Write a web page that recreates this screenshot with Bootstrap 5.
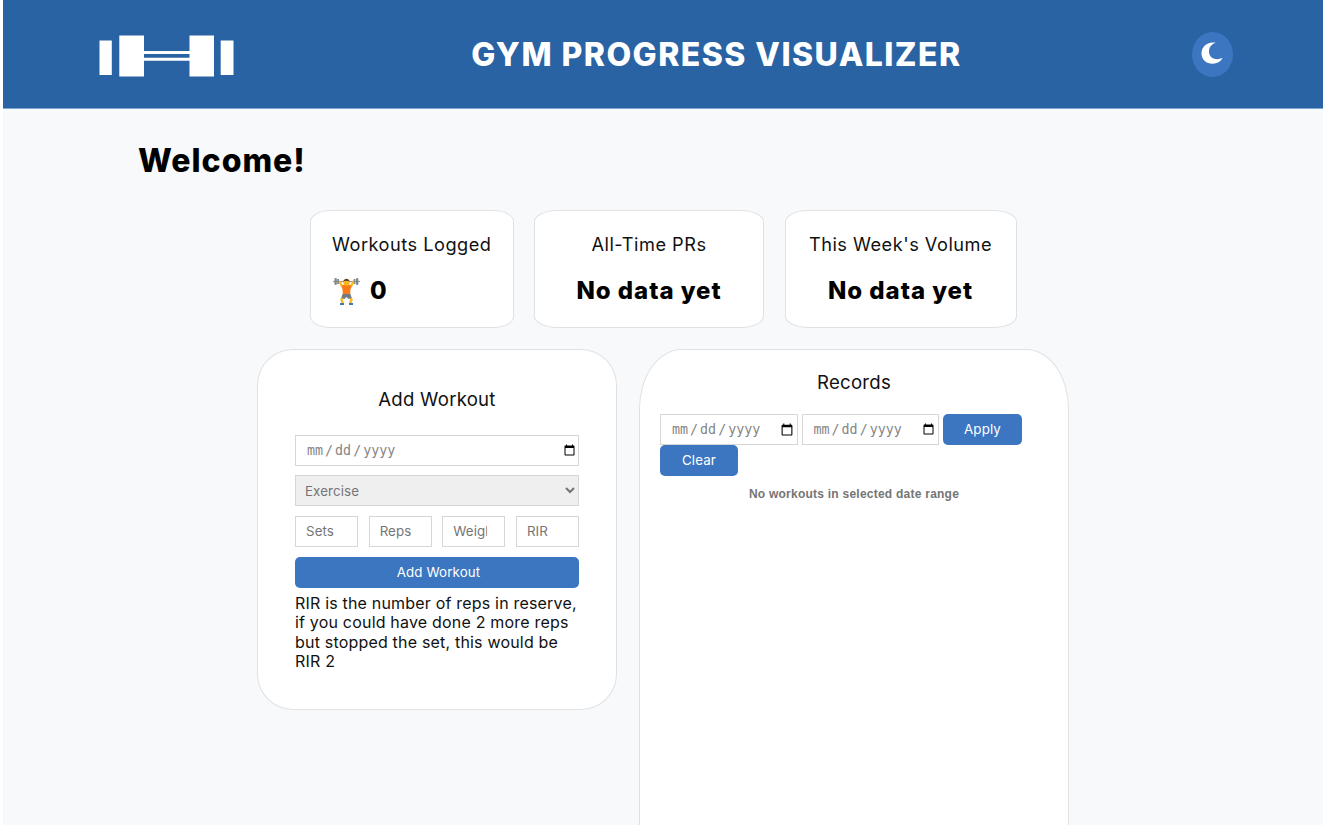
<!DOCTYPE html>
<html lang="en-US">
<head>
<meta charset="utf-8">
<meta name="viewport" content="width=device-width, initial-scale=1">
<title>Gym Progress Visualizer</title>
<link href="https://cdn.jsdelivr.net/npm/bootstrap@5.3.0/dist/css/bootstrap.min.css" rel="stylesheet">
<style>
html{overflow:hidden;background:#fff}
body{font-family:Inter,"Liberation Sans",sans-serif;font-size:16px;line-height:19.35px;letter-spacing:.19px;color:#111;background:#fff;height:825px;overflow:hidden}
.page-wrap{margin:0 3px;background:#f7f9fb;height:825px;overflow:hidden}
.site-head{height:109px;background:#2963a4;border-bottom:1px solid #7fa6d3;padding:0 90px 0 96px}
.site-head svg{margin-top:3px}
.site-head .moon-btn svg{margin-top:-3px}
.site-title{font-size:32px;font-weight:800;line-height:39px;letter-spacing:1.45px;color:#fff;padding-left:6px}
.moon-btn{width:41px;height:45px;border-radius:50%;background:#3c76c1;border:0}
.welcome{font-size:32px;line-height:42px;font-weight:800;color:#000;margin:31px 0 0 135px;letter-spacing:1px}
.stats{margin-top:28px;gap:20.5px;padding-left:307px}
.panel{background:#fff;border:1px solid #dfe2e5;border-radius:10%}
.stat{height:118px;padding:22px 21px}
.stat p{font-size:18.2px;line-height:22px;margin:0;letter-spacing:.5px}
.stat strong{font-size:24px;line-height:30px;color:#000;margin-top:21px;font-weight:800;letter-spacing:.95px}
.boards{margin-top:21px;padding-left:254px;gap:22px}
.add-panel{width:360px;height:361px;padding:38px 37px}
.rec-panel{width:430px;height:600px;padding:21px 20px}
.panel h2{font-size:18.6px;line-height:23px;font-weight:400;margin:0;text-align:center;letter-spacing:.25px}
.field{height:31px;border:1px solid #d6d6d6;border-radius:0;padding:0 17px 0 10px;font-size:13.33px;line-height:20px;color:#757575;background:#fff;letter-spacing:.1px;min-width:0}
.field::placeholder{color:#757575;opacity:1}
input[type=date].field{font-family:"DejaVu Sans Mono",monospace;font-size:13.33px;letter-spacing:0;padding:1px 1px 0 11px;color:#858585}
.add-panel input[type=date].field{padding-right:0}
input[type=date]::-webkit-datetime-edit-text{padding:0 2px}
select.field{background:#efefef;padding:0 5px}
.blue-btn{height:31px;background:#3c76c1;color:#fff;border-radius:5px;border:0;padding:0;font-size:13.33px;line-height:31px;letter-spacing:.12px}
.empty{font-family:"Liberation Sans",sans-serif;font-weight:700;font-size:12px;color:#757575;letter-spacing:.24px}
</style>
</head>
<body>
<div class="page-wrap">
<header class="site-head d-flex align-items-center justify-content-between">
<svg width="136" height="42" viewBox="0 0 136 42" fill="#fff"><path d="M.5 5.500h12.300v34.500H.5zM20.300.5H45v41H20.300zM90.500.5H115v41H90.500zM121.700 5.500h12.800v34.500h-12.800zM45 16h45.500v3H45zM45 22.700h45.500v3H45z"/></svg>
<h1 class="site-title m-0">GYM PROGRESS VISUALIZER</h1>
<button class="moon-btn d-flex align-items-center justify-content-center p-0" aria-label="Dark mode"><svg width="22" height="22" viewBox="0 0 22 22" fill="#fff"><path d="M14.800.8C6-.7.5 5 .5 11.500.5 17.800 5.500 21.700 11.500 21.700c4.900 0 8.500-2.200 10-5.600C13.500 19 8 15.500 8 9.500 8 5 10.500 2.200 14.800.8z"/></svg></button>
</header>
<main>
<h2 class="welcome">Welcome!</h2>
<section class="stats d-flex">
<div class="panel stat" style="width:203.500px"><p>Workouts Logged</p><strong class="d-flex align-items-center"><svg width="29" height="30" viewBox="0 0 29 30" fill="none"><path d="M1 5.500H28" stroke="#999" stroke-width="1.200"/><g fill="#7d888f"><rect x="2.500" y="2" width="2.300" height="7" rx="1"/><rect x="5.200" y="3" width="1.800" height="5"/><rect x="24" y="2" width="2.300" height="7" rx="1"/><rect x="21.600" y="3" width="1.800" height="5"/></g><path d="M7.500 5.500l3 5.500h8l3-5.500" stroke="#fbb91d" stroke-width="2.400"/><path d="M10 9h9l-1 10h-7z" fill="#f77b1b"/><circle cx="14.500" cy="6.500" r="3.200" fill="#f9b51f"/><path d="M11.300 6.200c0-4.700 6.400-4.700 6.400 0l-1-1.200h-4.400z" fill="#66432c"/><path d="M11.500 20L9.500 23.500 11 28M17.500 20l2 3.500L18 28" stroke="#fbb91d" stroke-width="2.400"/><path d="M10.500 18h8l1 4-3 1-2-2-2 2-3-1z" fill="#737b80"/><path d="M8 28h4M17 28h4" stroke="#4779a5" stroke-width="2"/></svg><span style="margin-left:9px">0</span></strong></div>
<div class="panel stat text-center" style="width:230px"><p>All-Time PRs</p><strong class="d-block text-nowrap">No data yet</strong></div>
<div class="panel stat text-center" style="width:232px"><p>This Week's Volume</p><strong class="d-block text-nowrap">No data yet</strong></div>
</section>
<section class="boards d-flex align-items-start">
<form class="panel add-panel">
<h2>Add Workout</h2>
<div class="d-grid" style="gap:9.500px;margin-top:23.500px">
<input type="date" class="field w-100" aria-label="Date">
<select class="field w-100" aria-label="Exercise"><option>Exercise</option></select>
<div class="d-flex" style="gap:10.500px"><input class="field w-100" placeholder="Sets"><input class="field w-100" placeholder="Reps"><input class="field w-100" placeholder="Weight"><input class="field w-100" placeholder="RIR"></div>
<button type="button" class="blue-btn w-100" style="margin-top:1px;padding-left:3px">Add Workout</button>
</div>
<p class="mb-0 text-nowrap" style="margin-top:6px">RIR is the number of reps in reserve,<br>if you could have done 2 more reps<br>but stopped the set, this would be<br>RIR 2</p>
</form>
<div class="panel rec-panel">
<h2>Records</h2>
<div class="d-flex flex-wrap" style="column-gap:4px;margin-top:20px">
<input type="date" class="field" style="width:137.500px" aria-label="From"><input type="date" class="field" style="width:137.500px" aria-label="To"><button class="blue-btn" style="width:79px">Apply</button>
<button class="blue-btn" style="width:78px">Clear</button>
</div>
<p class="empty text-center mb-0" style="margin-top:9px">No workouts in selected date range</p>
</div>
</section>
</main>
</div>
<script src="https://cdn.jsdelivr.net/npm/bootstrap@5.3.0/dist/js/bootstrap.bundle.min.js"></script>
</body>
</html>
